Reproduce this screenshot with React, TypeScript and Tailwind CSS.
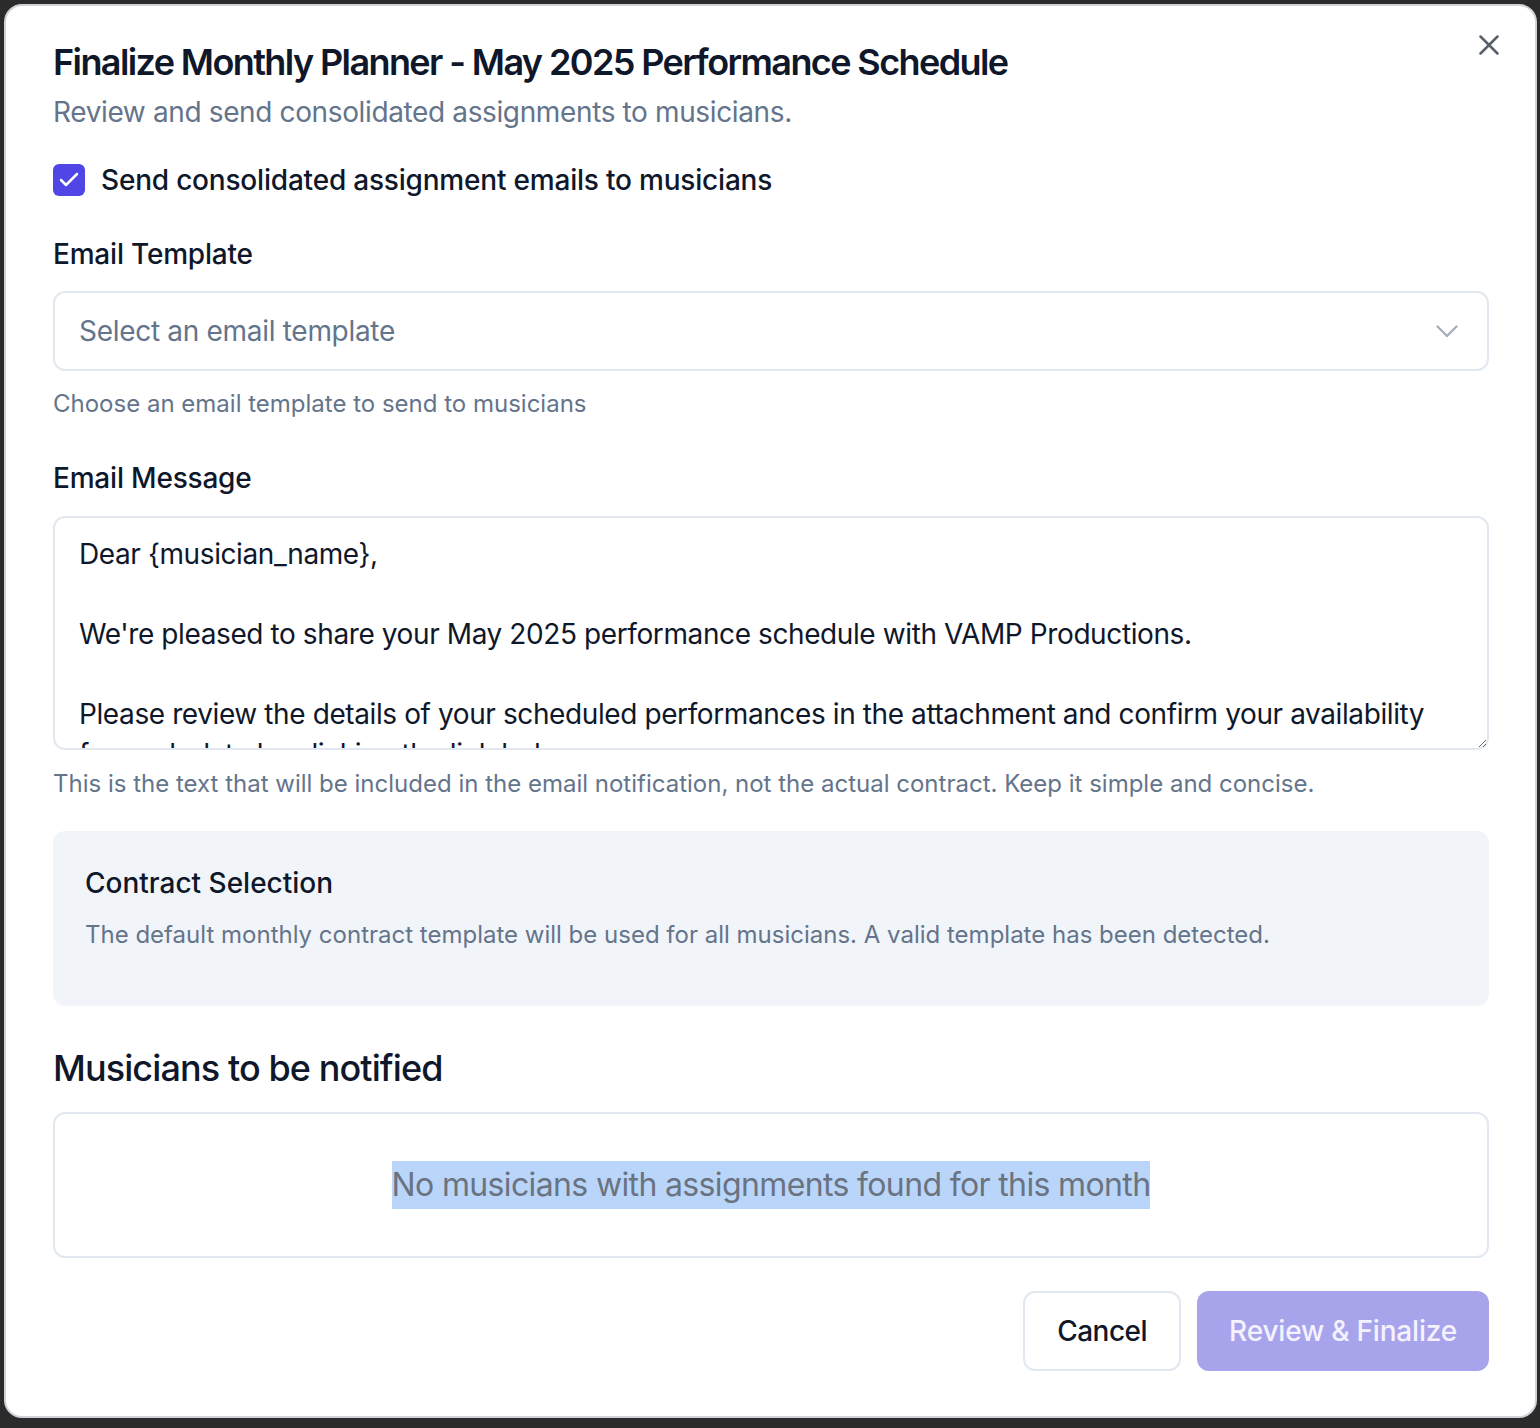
import { Check } from "lucide-react";

export default function App() {
  const message = `Dear {musician_name},

We're pleased to share your May 2025 performance schedule with VAMP Productions.

Please review the details of your scheduled performances in the attachment and confirm your availability for each date by clicking the link below:

{confirmation_link}

Best regards,
VAMP Productions`;

  return (
    <div
      className="w-[1540px] h-[1428px] bg-[#2b2b2b] pt-[4px] pl-[4px] overflow-hidden"
      style={{ fontFamily: "Inter, 'Noto Sans', sans-serif" }}
    >
      <div className="relative w-[1533px] h-[1414px] bg-white rounded-[18px] border-2 border-[#cfd3d9] pl-[47px] pt-[28px] flex flex-col">
        {/* close */}
        <button className="absolute top-[23px] right-[30px] w-[32px] h-[32px] flex items-center justify-center">
          <svg width="20" height="20" viewBox="0 0 20 20" fill="none" stroke="#5a606b" strokeWidth="2.5" strokeLinecap="round">
            <path d="M1.5 1.5 18.5 18.5" />
            <path d="M18.5 1.5 1.5 18.5" />
          </svg>
        </button>

        <div className="w-[1436px] flex flex-col">
          {/* Header */}
          <h2 className="text-[36px] leading-[56px] font-semibold tracking-[-1.6px] text-[#0f172a]">
            Finalize Monthly Planner - May 2025 Performance Schedule
          </h2>
          <p className="mt-[2px] text-[28px] leading-[40px] tracking-[-0.37px] text-[#64748b]">
            Review and send consolidated assignments to musicians.
          </p>

          {/* Checkbox */}
          <div className="mt-[28px] flex items-center gap-[16px] h-[40px]">
            <div className="w-[32px] h-[32px] rounded-[6px] bg-[#4f46e5] flex items-center justify-center">
              <Check className="w-[24px] h-[24px] text-white" strokeWidth={2.5} />
            </div>
            <span className="text-[28px] leading-[40px] font-medium tracking-[-0.2px] text-[#0f172a]">
              Send consolidated assignment emails to musicians
            </span>
          </div>

          {/* Email template */}
          <label className="mt-[34px] text-[28px] leading-[40px] font-medium tracking-[-0.2px] text-[#0f172a]">Email Template</label>
          <div className="mt-[17px] h-[80px] rounded-[12px] border-2 border-[#e2e8f0] px-[24px] flex items-center justify-between">
            <span className="text-[28px] leading-[40px] tracking-[-0.3px] text-[#64748b]">Select an email template</span>
            <svg width="22" height="13" viewBox="0 0 22 13" fill="none" stroke="#a9afba" strokeWidth="2.4" strokeLinecap="round" strokeLinejoin="round" className="mr-[5px]">
              <path d="M1.5 1.5 11 11 20.5 1.5" />
            </svg>
          </div>
          <p className="mt-[17px] text-[24px] leading-[32px] text-[#64748b]">
            Choose an email template to send to musicians
          </p>

          {/* Email message */}
          <label className="mt-[38px] text-[28px] leading-[40px] font-medium tracking-[-0.2px] text-[#0f172a]">Email Message</label>
          <textarea
            readOnly
            defaultValue={message}
            className="mt-[18px] h-[234px] rounded-[12px] border-2 border-[#e2e8f0] px-[24px] py-[16px] text-[28px] leading-[40px] tracking-[-0.4px] text-[#0f172a] overflow-hidden resize-y outline-none"
            style={{ fontFamily: "Inter, 'Noto Sans', sans-serif" }}
          />
          <p className="mt-[18px] text-[24px] leading-[32px] text-[#64748b]">
            This is the text that will be included in the email notification, not the actual contract. Keep it simple and concise.
          </p>

          {/* Contract selection */}
          <div className="mt-[31px] h-[175px] rounded-[12px] bg-[#f1f5f9] px-[32px] pt-[32px]">
            <h3 className="text-[28px] leading-[40px] font-medium text-[#0f172a]">Contract Selection</h3>
            <p className="mt-[16px] text-[24px] leading-[32px] text-[#64748b]">
              The default monthly contract template will be used for all musicians. A valid template has been detected.
            </p>
          </div>

          {/* Musicians */}
          <h3 className="mt-[34px] text-[36px] leading-[56px] font-medium tracking-[-0.9px] text-[#0f172a]">Musicians to be notified</h3>
          <div className="mt-[16px] h-[146px] rounded-[12px] border-2 border-[#e2e8f0] flex items-center justify-center">
            <span className="text-[32px] leading-[48px] tracking-[-0.64px] text-[#6b7280] bg-[#b9d6fa]">
              No musicians with assignments found for this month
            </span>
          </div>

          {/* Footer */}
          <div className="mt-[33px] flex justify-end gap-[16px]">
            <button className="h-[80px] px-[32px] rounded-[12px] border-2 border-[#e2e8f0] bg-white text-[28px] font-medium tracking-[-0.5px] text-[#0f172a]">
              Cancel
            </button>
            <button className="h-[80px] px-[32px] rounded-[12px] bg-[#a8a4ec] text-[28px] font-medium tracking-[-0.2px] text-[#f3f2fd]">
              Review &amp; Finalize
            </button>
          </div>
        </div>
      </div>
    </div>
  );
}
